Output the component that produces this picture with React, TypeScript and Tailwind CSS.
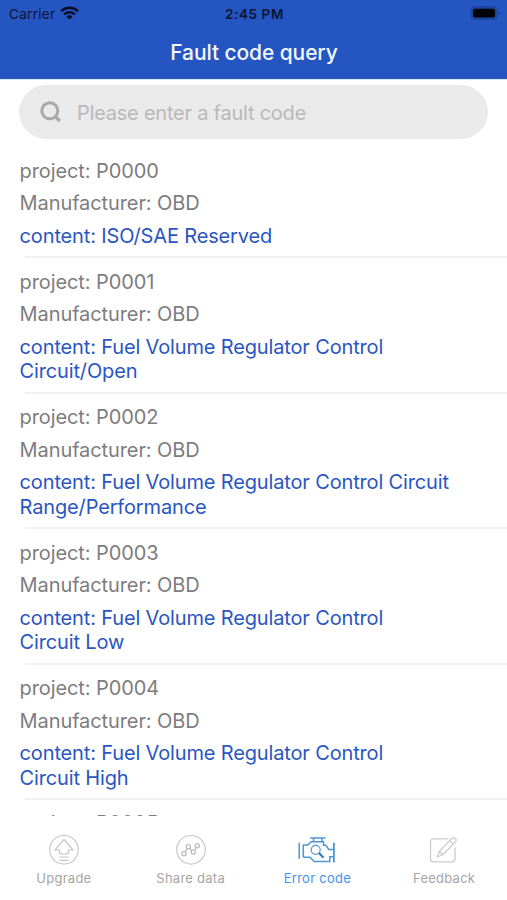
import React from "react";

type Fault = { code: string; content: string[] };

const faults: Fault[] = [
  { code: "P0000", content: ["ISO/SAE Reserved"] },
  { code: "P0001", content: ["Fuel Volume Regulator Control", "Circuit/Open"] },
  { code: "P0002", content: ["Fuel Volume Regulator Control Circuit", "Range/Performance"] },
  { code: "P0003", content: ["Fuel Volume Regulator Control", "Circuit Low"] },
  { code: "P0004", content: ["Fuel Volume Regulator Control", "Circuit High"] },
  { code: "P0005", content: [] },
];

function StatusBar() {
  return (
    <div className="grid h-[27px] grid-cols-3 items-center pt-px pl-[9px] pr-[7px] text-[13.5px] text-[#0a1433]">
      <div className="flex items-center gap-[5px]">
        <span className="tracking-[0.3px]">Carrier</span>
        <svg className="-mt-[2px]" width="19" height="14" viewBox="0 0 19 14" fill="none" stroke="#060d24" strokeWidth="2.5">
          <path d="M1 5.1a12.2 12.2 0 0 1 17 0" />
          <path d="M4.1 8.3a7.8 7.8 0 0 1 10.8 0" />
          <path d="M9.5 13.6 6.4 10.5a4.4 4.4 0 0 1 6.2 0Z" fill="#060d24" stroke="none" />
        </svg>
      </div>
      <span className="text-center font-semibold tracking-[0.6px]">2:45 PM</span>
      <svg className="-mt-[2px] justify-self-end" width="30" height="14" viewBox="0 0 30 14">
        <rect x="1" y="0.5" width="26" height="13" rx="4" fill="#1c469f" stroke="#1c469f" />
        <rect x="3" y="2.8" width="22" height="8.600" rx="2" fill="#000308" />
        <path d="M28.300 5v4q1.600-.5 1.600-2t-1.600-2Z" fill="#183d91" />
      </svg>
    </div>
  );
}

function FaultRow({ code, content }: Fault) {
  return (
    <li className="flex shrink-0 flex-col pl-[19.6px] text-[20px] leading-[24.4px] text-[#7d7d7d]">
      <p className="pt-[11.4px] tracking-[-0.1px]">project: {code}</p>
      {content.length > 0 && (
        <>
          <p className="pt-[8.4px] tracking-[-0.1px]">Manufacturer: OBD</p>
          <p className="pt-[8px] pb-[8.050px] tracking-[-0.15px] text-[#2a56c1]">
            {content.map((line, i) => (
              <span key={line} className="block whitespace-nowrap">
                {i === 0 ? `content: ${line}` : line}
              </span>
            ))}
          </p>
          <div className="ml-[5px] h-[2px] bg-[#f2f2f2]" />
        </>
      )}
    </li>
  );
}

function UpgradeIcon() {
  return (
    <svg width="40" height="32" viewBox="0 0 40 32" fill="none" stroke="#c8c8c8" strokeWidth="1.200">
      <circle cx="20" cy="15.800" r="14.300" />
      <path d="M20 5.500 29 16h-4.500v3.500h-2.500M20 5.500 11 16h4.500v3.500H18M17 20h6M15.500 23h9M15.500 26.300h9" />
    </svg>
  );
}

function ShareIcon() {
  return (
    <svg width="40" height="32" viewBox="0 0 40 32" fill="none" stroke="#bdbdbd" strokeWidth="1.300">
      <circle cx="20" cy="15.800" r="14.300" strokeWidth="1.200" stroke="#c8c8c8" />
      <circle cx="13" cy="19.700" r="2.100" />
      <circle cx="17.300" cy="12.800" r="2.100" />
      <circle cx="22.300" cy="18" r="2.100" />
      <circle cx="26.300" cy="11.800" r="2.100" />
      <path d="m14 17.900 2.300-3.400M18.600 14.500l2.200 2M23.400 16.200l1.900-2.600" />
    </svg>
  );
}

function EngineIcon() {
  return (
    <svg width="40" height="32" viewBox="0 0 40 32" fill="none" stroke="#4c96d6" strokeWidth="1.500">
      <path d="M2.200 8.800v16M13.300 3.900h15.200M16.500 4.500v3.200M25 4.500v3.200" />
      <path d="M6.300 23.200V11h4.400l3.500-3.300h12.300v3.600h2.300l3 4.200h5M37 22.800h-4.200v4.700H17.200l-4.200-4.300H6.300" />
      <path d="M36.900 8.800v19.700" strokeWidth="1.800" />
      <circle cx="18.700" cy="15.800" r="4.500" strokeWidth="1.200" />
      <path d="m22 19 4.500 4.800" stroke="#2f76b8" strokeWidth="2" />
    </svg>
  );
}

function FeedbackIcon() {
  return (
    <svg width="40" height="32" viewBox="0 0 40 32" fill="none" stroke="#cccccc" strokeWidth="1.300">
      <path d="M24.500 4.800H9.500Q6.500 4.800 6.500 7.800v17q0 3 3 3h18.500q3 0 3-3V13.500" />
      <path d="M13.500 22.800l1.800-5.500L28 4.300q1.500-1.300 3.200.2 1.800 1.700.3 3.200L18.800 20.800 13.500 22.800ZM25.800 6.600l3.500 3.500M15.300 17.300l3.500 3.500" />
    </svg>
  );
}

const tabs = [
  { label: "Upgrade", Icon: UpgradeIcon, active: false },
  { label: "Share data", Icon: ShareIcon, active: false },
  { label: "Error code", Icon: EngineIcon, active: true },
  { label: "Feedback", Icon: FeedbackIcon, active: false },
];

export default function App() {
  return (
    <main className="flex h-[900px] w-[507px] flex-col overflow-hidden bg-white font-['Inter',sans-serif]">
      <header className="h-[79px] shrink-0 bg-[#2455c1]">
        <StatusBar />
        <h1 className="pt-[12px] pl-px text-center text-[21px] leading-[27px] font-medium tracking-[-0.1px] text-[#f3f7ff]">
          Fault code query
        </h1>
      </header>
      <div className="h-[6px] shrink-0 border-t border-[#d8e8fc]" />
      <label className="mx-[19px] flex h-[54px] shrink-0 items-center rounded-full bg-[#eaeaea] pl-[20px]">
        <svg width="24" height="24" viewBox="0 0 24 24" fill="none" stroke="#a9a9a9" strokeWidth="3">
          <circle cx="10.800" cy="10.800" r="8" />
          <path d="m15.500 15.800 5.300 5.200" strokeWidth="3.500" />
        </svg>
        <input
          className="ml-[14px] w-[350px] bg-transparent pt-px text-[20px] tracking-[-0.23px] outline-none placeholder:text-[#b9b9b9]"
          placeholder="Please enter a fault code"
        />
      </label>
      <ul className="mt-[8px] flex h-[669px] shrink-0 flex-col overflow-hidden pt-[0.2px]">
        {faults.map((f) => (
          <FaultRow key={f.code} {...f} />
        ))}
      </ul>
      <nav className="grid grow grid-cols-4 pt-[18px]">
        {tabs.map(({ label, Icon, active }) => (
          <div
            key={label}
            className={
              active
                ? "flex flex-col items-center pl-px text-[13px] leading-[18px] tracking-[0.25px] text-[#4292f5]"
                : "flex flex-col items-center pl-px text-[13px] leading-[18px] tracking-[0.25px] text-[#a5a5a5]"
            }
          >
            <Icon />
            <span className="mt-[3px]">{label}</span>
          </div>
        ))}
      </nav>
    </main>
  );
}
